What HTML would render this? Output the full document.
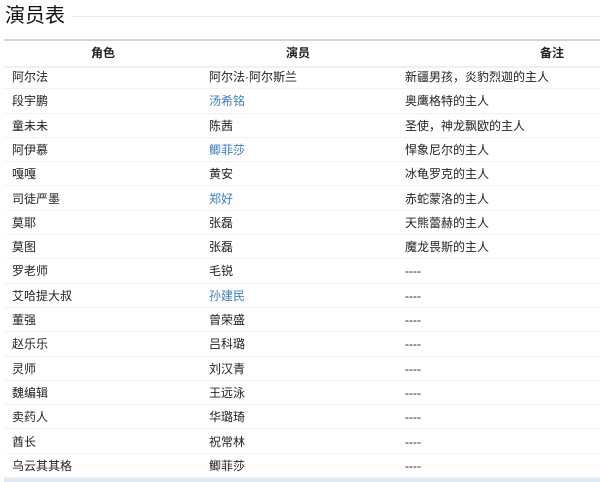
<!DOCTYPE html>
<html><head><meta charset="utf-8"><style>
body{margin:0;width:600px;height:482px;background:#fff;font-family:"Liberation Sans","Noto Sans CJK SC",sans-serif;font-size:12px;color:#222;overflow:hidden;position:relative}
h2{position:absolute;left:5px;top:2px;margin:0;font-size:20px;font-weight:normal;color:#111;line-height:28px}
.hl{position:absolute;left:72px;top:16px;right:0;height:1px;background:#e6e6e6}
.hd{position:absolute;left:4px;right:0;top:39px;height:25px;border-top:2px solid #d4d4d4;border-bottom:2px solid #f0f0f0;font-weight:bold}
.hd span{position:absolute;top:3px}
.r{position:absolute;left:4px;right:0;height:24.3px;border-bottom:1px solid #f2f2f2;box-sizing:border-box}
.r span{position:absolute;top:4px;line-height:16px}
.c1{left:8px}.c2{left:205px}.c3{left:401px}
a{color:#3a7fc8;text-decoration:none}
.ft{position:absolute;left:4px;right:0;top:478px;height:4px;background:#dfeaf7}
</style></head><body>
<h2>演员表</h2><div class="hl"></div>
<div class="hd"><span style="left:87px">角色</span><span style="left:282px">演员</span><span style="left:536px">备注</span></div>
<div class="r" style="top:65px"><span class="c1">阿尔法</span><span class="c2">阿尔法·阿尔斯兰</span><span class="c3">新疆男孩，炎豹烈迦的主人</span></div>
<div class="r" style="top:89.3px"><span class="c1">段宇鹏</span><span class="c2"><a>汤希铭</a></span><span class="c3">奥鹰格特的主人</span></div>
<div class="r" style="top:113.6px"><span class="c1">童未未</span><span class="c2">陈茜</span><span class="c3">圣使，神龙飘欧的主人</span></div>
<div class="r" style="top:137.9px"><span class="c1">阿伊慕</span><span class="c2"><a>鲫菲莎</a></span><span class="c3">悍象尼尔的主人</span></div>
<div class="r" style="top:162.2px"><span class="c1">嘎嘎</span><span class="c2">黄安</span><span class="c3">冰龟罗克的主人</span></div>
<div class="r" style="top:186.5px"><span class="c1">司徒严墨</span><span class="c2"><a>郑好</a></span><span class="c3">赤蛇蒙洛的主人</span></div>
<div class="r" style="top:210.8px"><span class="c1">莫耶</span><span class="c2">张磊</span><span class="c3">天熊蕾赫的主人</span></div>
<div class="r" style="top:235.1px"><span class="c1">莫图</span><span class="c2">张磊</span><span class="c3">魔龙畏斯的主人</span></div>
<div class="r" style="top:259.4px"><span class="c1">罗老师</span><span class="c2">毛锐</span><span class="c3">----</span></div>
<div class="r" style="top:283.7px"><span class="c1">艾哈提大叔</span><span class="c2"><a>孙建民</a></span><span class="c3">----</span></div>
<div class="r" style="top:308px"><span class="c1">董强</span><span class="c2">曾荣盛</span><span class="c3">----</span></div>
<div class="r" style="top:332.3px"><span class="c1">赵乐乐</span><span class="c2">吕科璐</span><span class="c3">----</span></div>
<div class="r" style="top:356.6px"><span class="c1">灵师</span><span class="c2">刘汉青</span><span class="c3">----</span></div>
<div class="r" style="top:380.9px"><span class="c1">魏编辑</span><span class="c2">王远泳</span><span class="c3">----</span></div>
<div class="r" style="top:405.2px"><span class="c1">卖药人</span><span class="c2">华璐琦</span><span class="c3">----</span></div>
<div class="r" style="top:429.5px"><span class="c1">酋长</span><span class="c2">祝常林</span><span class="c3">----</span></div>
<div class="r" style="top:453.8px"><span class="c1">乌云其其格</span><span class="c2">鲫菲莎</span><span class="c3">----</span></div>
<div class="ft"></div>
</body></html>
